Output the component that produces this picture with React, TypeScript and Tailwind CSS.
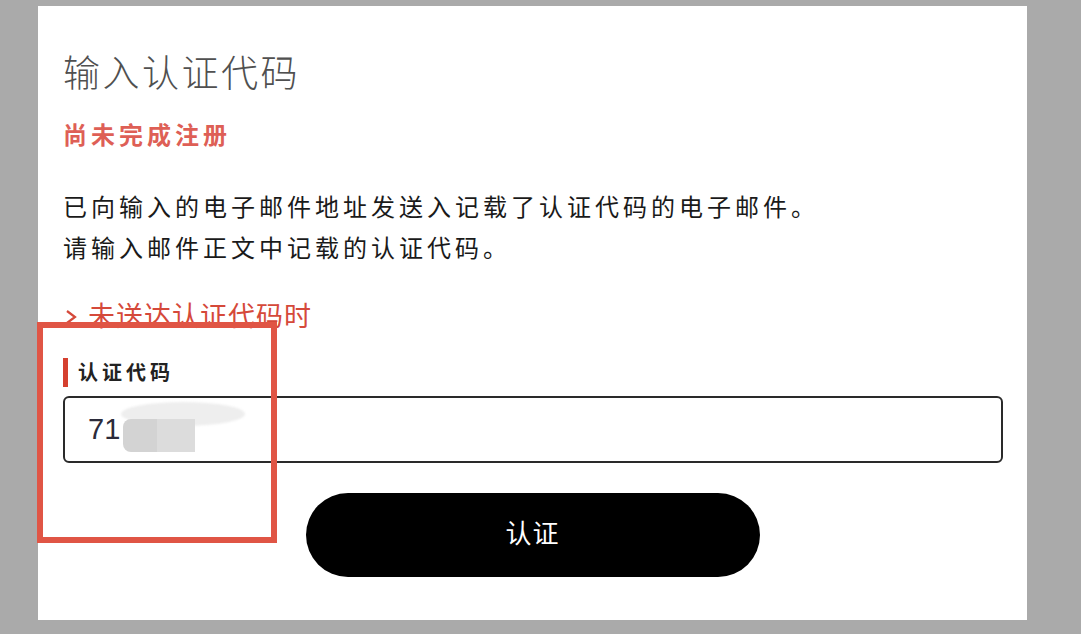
import React from "react";

const cjk = { fontFamily: '"Noto Sans CJK SC", "Noto Sans", sans-serif' };

export default function App() {
  return (
    <div className="relative w-[1081px] h-[634px] bg-[#aaaaaa] pt-[6px] pl-[38px] overflow-hidden" style={cjk}>
      <div className="w-[989px] h-[614px] bg-white px-[25px] flex flex-col">
        <h1 className="mt-[41px] text-[37px] leading-[48px] tracking-[2.5px] font-light text-[#505050]">
          输入认证代码
        </h1>
        <p className="mt-[23px] text-[24px] leading-[32px] tracking-[4px] font-bold text-[#de5f56]">
          尚未完成注册
        </p>
        <div className="mt-[35px] text-[24px] leading-[41px] tracking-[4px] text-[#1a1a1a]">
          <p>已向输入的电子邮件地址发送入记载了认证代码的电子邮件。</p>
          <p>请输入邮件正文中记载的认证代码。</p>
        </div>
        <a className="mt-[30px] text-[27px] leading-[36px] tracking-[1px] text-[#d5493a] flex items-center">
          <svg width="13" height="16" viewBox="0 0 13 16" className="ml-[2px] mr-[10px] mt-[4px]">
            <path d="M2 2 L10 8 L2 14" fill="none" stroke="#d5493a" strokeWidth="2.2" />
          </svg>
          未送达认证代码时
        </a>
        <div className="mt-[24px] flex items-center h-[30px]">
          <span className="w-[5px] h-[29px] bg-[#d5402f] mr-[10px]" />
          <span className="text-[20px] font-bold tracking-[4px] text-[#222]">认证代码</span>
        </div>
        <div className="relative mt-[9px] h-[67px] w-[940px] border-2 border-[#2a2a2a] rounded-[6px] flex items-center pl-[23px]">
          <span className="text-[29px] text-[#2b2b3a]" style={{ fontFamily: '"Liberation Sans", sans-serif' }}>71</span>
          <div className="absolute left-[56px] top-[4px] w-[124px] h-[24px] rounded-[50%] bg-[#eeeeee] blur-[1px]" />
          <div className="absolute left-[58px] top-[21px] w-[34px] h-[33px] bg-[#d3d3d3] rounded-l-[8px]" />
          <div className="absolute left-[92px] top-[21px] w-[38px] h-[33px] bg-[#dcdcdc]" />
        </div>
        <div className="mt-[30px] flex justify-center">
          <button className="w-[454px] h-[84px] rounded-full bg-black text-white text-[26px] leading-[26px] tracking-[1px] pb-[6px]">
            认证
          </button>
        </div>
      </div>
      <div className="absolute left-[37px] top-[322px] w-[240px] h-[221px] border-[6px] border-[#e05545]" />
    </div>
  );
}
